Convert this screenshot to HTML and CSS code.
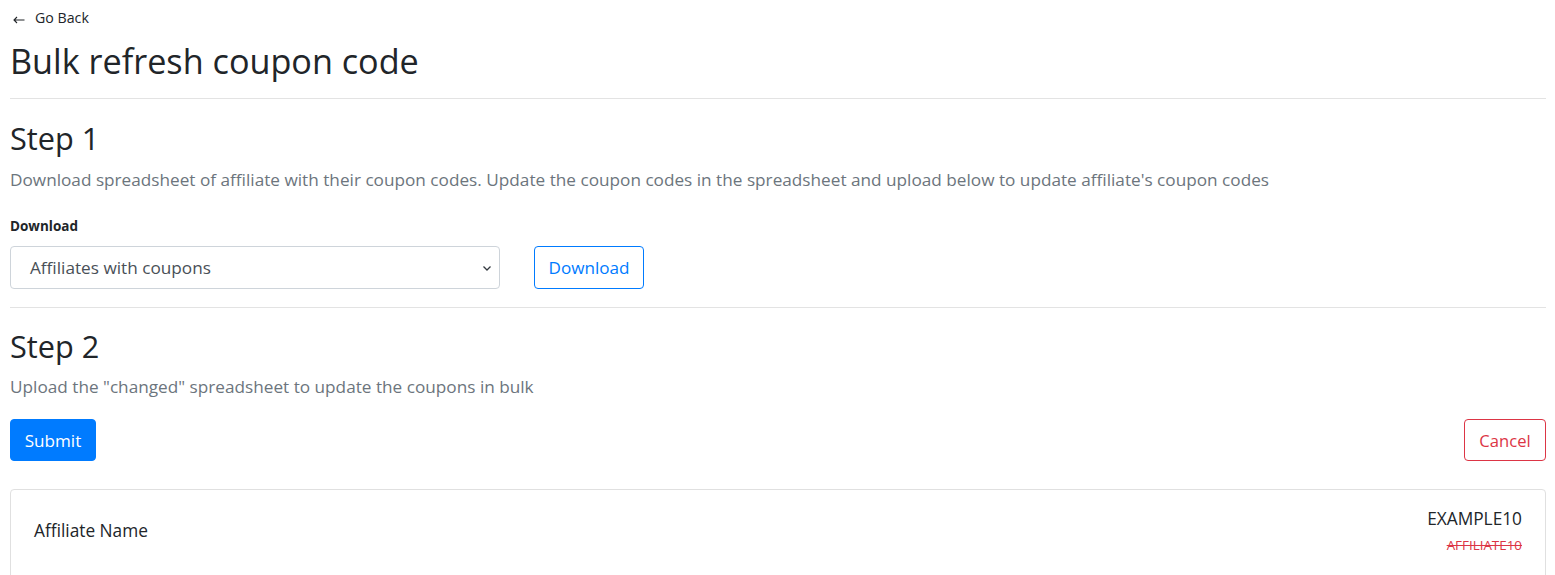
FILE: index.html
```html
<!DOCTYPE html>
<html>
<head>
<meta charset="utf-8">
<link rel="stylesheet" href="styles.css">
</head>
<body>
<div class="page">
  <a class="back" href="#"><svg class="arrow" width="12" height="12" viewBox="0 0 12 12"><path d="M11.5 8 H1 M4 5 L1 8 L4 11" fill="none" stroke="#212529" stroke-width="1.1"/></svg><span>Go Back</span></a>
  <h1 class="title">Bulk refresh coupon code</h1>
  <hr class="rule first">
  <section class="step">
    <h2 class="step-title">Step 1</h2>
    <p class="muted">Download spreadsheet of affiliate with their coupon codes. Update the coupon codes in the spreadsheet and upload below to update affiliate's coupon codes</p>
    <label class="label">Download</label>
    <div class="download-row">
      <div class="select">
        <span>Affiliates with coupons</span>
        <svg class="chev" width="10" height="8" viewBox="0 0 10 8"><path d="M1.5 2.5 L5 6 L8.5 2.5" fill="none" stroke="#343a40" stroke-width="1.3"/></svg>
      </div>
      <button class="btn btn-outline-primary">Download</button>
    </div>
  </section>
  <hr class="rule second">
  <section class="step">
    <h2 class="step-title two">Step 2</h2>
    <p class="muted tight">Upload the "changed" spreadsheet to update the coupons in bulk</p>
    <div class="actions">
      <button class="btn btn-primary">Submit</button>
      <button class="btn btn-outline-danger">Cancel</button>
    </div>
  </section>
  <div class="card">
    <div class="name">Affiliate Name</div>
    <div class="codes">
      <div class="new-code">EXAMPLE10</div>
      <div class="old-code">AFFILIATE10</div>
    </div>
  </div>
</div>
</body>
</html>
```
FILE: styles.css
```css
* { box-sizing: border-box; }
html, body { margin: 0; padding: 0; background: #fff; }
body {
  font-family: "Open Sans", "Noto Sans", sans-serif;
  color: #212529;
  overflow: hidden;
}
.page { padding: 0 9px 0 10px; }
.back {
  display: flex;
  align-items: center;
  gap: 10px;
  height: 19px;
  margin-top: 8px;
  font-size: 14.2px;
  color: #212529;
  text-decoration: none;
}
.arrow { margin-left: 3px; }
.title {
  margin: 14px 0 0;
  font-weight: 400;
  font-size: 34.2px;
  line-height: 40px;
}
.rule { border: 0; border-top: 1px solid #e3e3e3; margin: 0; }
.rule.first { margin-top: 17px; }
.step-title {
  margin: 20px 0 0;
  font-weight: 400;
  font-size: 30.7px;
  line-height: 38px;
}
.step-title.two { margin-top: 19px; }
.muted {
  margin: 11px 0 0;
  color: #6c757d;
  font-size: 17.2px;
  line-height: 24px;
}
.muted.tight { margin-top: 10px; }
.label {
  display: block;
  margin-top: 26px;
  font-size: 13.5px;
  font-weight: 700;
  line-height: 16px;
}
.download-row {
  display: flex;
  gap: 34px;
  margin-top: 12px;
}
.select {
  width: 490px;
  height: 43px;
  border: 1px solid #ced4da;
  border-radius: 4px;
  display: flex;
  align-items: center;
  justify-content: space-between;
  padding: 0 7px 0 19px;
  font-size: 17.2px;
  color: #495057;
}
.btn {
  font-family: inherit;
  font-size: 17.1px;
  height: 43px;
  border-radius: 4px;
  background: #fff;
  padding: 0 8px;
  cursor: pointer;
}
.btn-outline-primary { border: 1px solid #007bff; color: #007bff; width: 110px; }
.btn-primary { background: #007bff; border: 1px solid #007bff; color: #fff; width: 86px; height: 42px; }
.btn-outline-danger { border: 1px solid #dc3545; color: #dc3545; width: 82px; height: 42px; font-size: 16.6px; }
.rule.second { margin-top: 18px; }
.actions {
  display: flex;
  justify-content: space-between;
  margin-top: 20px;
}
.card {
  margin-top: 28px;
  border: 1px solid #e0e0e0;
  border-radius: 4px;
  height: 120px;
  display: flex;
  justify-content: space-between;
  align-items: flex-start;
  padding: 18px 23px 0 23px;
}
.name { margin-top: 12px; font-size: 17.3px; line-height: 22px; }
.codes { text-align: right; }
.new-code { font-size: 17.3px; line-height: 22px; }
.old-code {
  margin-top: 7px;
  font-size: 13.4px;
  line-height: 16px;
  color: #dc3545;
  text-decoration: line-through;
}
```
